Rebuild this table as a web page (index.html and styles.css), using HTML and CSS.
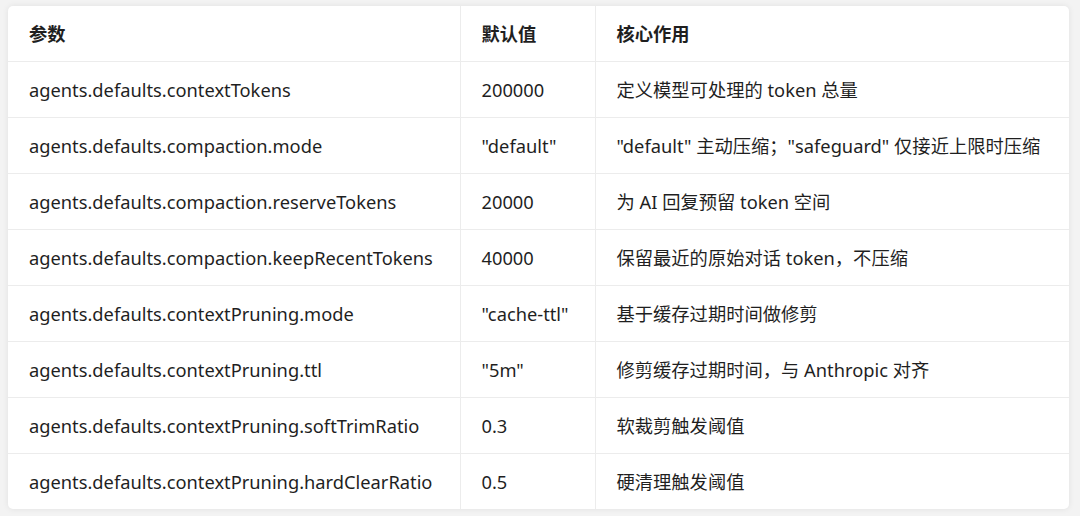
FILE: index.html
```html
<!DOCTYPE html>
<html lang="zh">
<head>
<meta charset="utf-8">
<link rel="stylesheet" href="styles.css">
</head>
<body>
<div class="card">
<table class="tbl">
<colgroup><col class="c1"><col class="c2"><col class="c3"></colgroup>
<thead>
<tr><th>参数</th><th>默认值</th><th>核心作用</th></tr>
</thead>
<tbody>
<tr><td>agents.defaults.contextTokens</td><td>200000</td><td>定义模型可处理的 token 总量</td></tr>
<tr><td>agents.defaults.compaction.mode</td><td>"default"</td><td>"default" 主动压缩；"safeguard" 仅接近上限时压缩</td></tr>
<tr><td>agents.defaults.compaction.reserveTokens</td><td>20000</td><td>为 AI 回复预留 token 空间</td></tr>
<tr><td>agents.defaults.compaction.keepRecentTokens</td><td>40000</td><td>保留最近的原始对话 token，不压缩</td></tr>
<tr><td>agents.defaults.contextPruning.mode</td><td>"cache-ttl"</td><td>基于缓存过期时间做修剪</td></tr>
<tr><td>agents.defaults.contextPruning.ttl</td><td>"5m"</td><td>修剪缓存过期时间，与 Anthropic 对齐</td></tr>
<tr><td>agents.defaults.contextPruning.softTrimRatio</td><td>0.3</td><td>软裁剪触发阈值</td></tr>
<tr><td>agents.defaults.contextPruning.hardClearRatio</td><td>0.5</td><td>硬清理触发阈值</td></tr>
</tbody>
</table>
</div>
</body>
</html>
```
FILE: styles.css
```css
html, body {
  margin: 0;
  padding: 0;
  background: #f3f3f3;
}
body {
  padding: 6px 11px 6px 8px;
  font-family: "Noto Sans", "Noto Sans CJK SC", sans-serif;
  color: #1f1f1f;
}
.card {
  background: #ffffff;
  border-radius: 5px;
  box-shadow: 0 0 6px rgba(0,0,0,0.08);
  overflow: hidden;
}
.tbl {
  width: 100%;
  border-collapse: collapse;
  font-size: 18.3px;
}
.c1 { width: 452px; }
.c2 { width: 135px; }
.tbl th, .tbl td {
  height: 55px;
  padding: 0 20px 0 21px;
  text-align: left;
  vertical-align: middle;
  border-bottom: 1px solid #ececec;
  border-right: 1px solid #ececec;
  white-space: nowrap;
  line-height: 22px;
}
.tbl th:last-child, .tbl td:last-child { border-right: none; }
.tbl tbody tr:last-child td { border-bottom: none; }
.tbl th { font-weight: 700; }
```
